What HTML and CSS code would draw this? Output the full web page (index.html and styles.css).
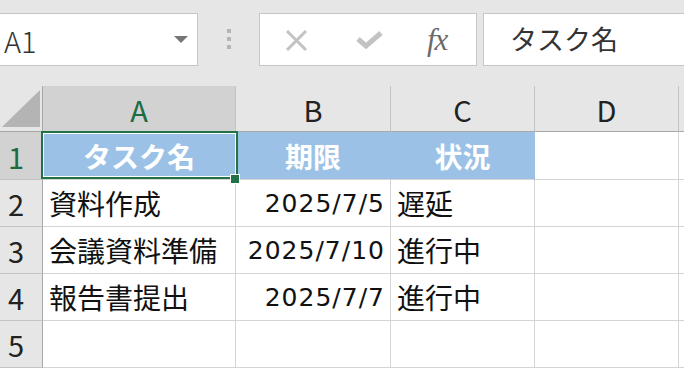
FILE: index.html
```html
<!DOCTYPE html>
<html lang="ja">
<head>
  <meta charset="UTF-8" />
  <title>タスク一覧</title>
  <link rel="stylesheet" href="styles.css">
</head>
<body>

  <!-- 数式バー -->
  <div class="toolbar">
    <div class="namebox">
      <span class="ref">A1</span>
      <span class="caret"></span>
    </div>
    <div class="grip"><i></i><i></i><i></i></div>
    <div class="fxbox">
      <svg class="ico-x" width="23" height="21" viewBox="0 0 23 21">
        <path d="M2 1 L21 20 M21 1 L2 20" stroke="#c3c3c3" stroke-width="3" fill="none" />
      </svg>
      <svg class="ico-ok" width="27" height="18" viewBox="0 0 27 18">
        <path d="M2 8 L10 15 L25 2" stroke="#c3c3c3" stroke-width="5" fill="none" />
      </svg>
      <span class="fx">fx</span>
    </div>
    <div class="formula">タスク名</div>
  </div>

  <!-- シート -->
  <div class="sheet">
    <div class="hd corner"><span class="tri"></span></div>
    <div class="hd col active">A</div>
    <div class="hd col">B</div>
    <div class="hd col">C</div>
    <div class="hd col">D</div>
    <div class="hd col last"></div>

    <div class="hd row active">1</div>
    <div class="c title">タスク名</div>
    <div class="c title">期限</div>
    <div class="c title">状況</div>
    <div class="c"></div>
    <div class="c"></div>

    <div class="hd row">2</div>
    <div class="c">資料作成</div>
    <div class="c num">2025/7/5</div>
    <div class="c">遅延</div>
    <div class="c"></div>
    <div class="c"></div>

    <div class="hd row">3</div>
    <div class="c">会議資料準備</div>
    <div class="c num">2025/7/10</div>
    <div class="c">進行中</div>
    <div class="c"></div>
    <div class="c"></div>

    <div class="hd row">4</div>
    <div class="c">報告書提出</div>
    <div class="c num">2025/7/7</div>
    <div class="c">進行中</div>
    <div class="c"></div>
    <div class="c"></div>

    <div class="hd row">5</div>
    <div class="c"></div>
    <div class="c"></div>
    <div class="c"></div>
    <div class="c"></div>
    <div class="c"></div>

    <!-- 選択セル枠 -->
    <div class="sel"></div>
    <div class="handle"></div>
  </div>

</body>
</html>
```

FILE: styles.css
```css
body {
  margin: 0;
  background: #fff;
  font-family: "Noto Sans CJK JP", sans-serif;
  overflow: hidden;
}

/* 数式バー */
.toolbar {
  display: flex;
  align-items: flex-start;
  height: 86px;
  padding-top: 13px;
  box-sizing: border-box;
  background: #e6e6e6;
}

.namebox {
  width: 198px;
  height: 53px;
  box-sizing: border-box;
  background: #fff;
  border: 1px solid #c6c6c6;
  border-left: none;
  display: flex;
  align-items: center;
  justify-content: space-between;
  padding: 0 9px 0 4px;
}
.namebox .ref {
  font-size: 29px;
  color: #333;
  font-weight: 300;
}
.namebox .caret {
  width: 0;
  height: 0;
  border-left: 7px solid transparent;
  border-right: 7px solid transparent;
  border-top: 7px solid #767676;
}

.grip {
  display: flex;
  flex-direction: column;
  gap: 4px;
  margin: 16px 0 0 29px;
}
.grip i {
  width: 4px;
  height: 4px;
  background: #b4b4b4;
}

.fxbox {
  width: 218px;
  height: 53px;
  box-sizing: border-box;
  margin-left: 28px;
  background: #fff;
  border: 1px solid #c6c6c6;
  display: flex;
  align-items: center;
  padding-left: 25px;
}
.ico-x {
  margin-top: 1px;
}
.ico-ok {
  margin: 1px 0 0 48px;
}
.fx {
  margin-left: 44px;
  font-family: "Liberation Serif", serif;
  font-style: italic;
  font-size: 31px;
  color: #6b6b6b;
  letter-spacing: -1px;
}

.formula {
  flex: 1;
  height: 53px;
  box-sizing: border-box;
  margin-left: 6px;
  background: #fff;
  border: 1px solid #c6c6c6;
  border-right: none;
  padding-left: 26px;
  font-size: 27px;
  line-height: 50px;
  color: #333;
}

/* シート */
.sheet {
  position: relative;
  display: grid;
  grid-template-columns: 43px 193px 155px 144px 144px 1fr;
  grid-template-rows: 46px 48px 47px 47px 47px 47px;
}

.hd {
  box-sizing: border-box;
  background: #e6e6e6;
  display: flex;
  align-items: center;
  justify-content: center;
  font-size: 29px;
  color: #222;
}
.hd.col {
  border-right: 1px solid #c4c4c4;
  border-bottom: 1px solid #a8a8a8;
}
.hd.last {
  border-right: none;
}
.hd.row {
  justify-content: flex-start;
  padding-left: 8px;
  border-right: 1px solid #a8a8a8;
  border-bottom: 1px solid #c4c4c4;
}
.hd.active {
  background: #d2d2d2;
  color: #1d6b41;
}
.corner {
  border-right: 1px solid #a8a8a8;
  border-bottom: 1px solid #a8a8a8;
  justify-content: flex-start;
  align-items: flex-start;
  padding: 4px 0 0 2px;
}
.tri {
  width: 0;
  height: 0;
  border-left: 38px solid transparent;
  border-bottom: 37px solid #b4b4b4;
}

.c {
  box-sizing: border-box;
  border-right: 1px solid #d4d4d4;
  border-bottom: 1px solid #d4d4d4;
  display: flex;
  align-items: center;
  padding: 0 6px;
  font-size: 28px;
  color: #111;
  white-space: nowrap;
  overflow: hidden;
}
.c.num {
  justify-content: flex-end;
  padding-right: 5px;
  font-family: "DejaVu Sans", sans-serif;
  font-size: 25px;
  letter-spacing: 1px;
}
.c.title {
  background: #9bc2e6;
  border-right-color: #9bc2e6;
  justify-content: center;
  color: #fff;
  font-weight: bold;
}

/* 選択セル枠 */
.sel {
  position: absolute;
  left: 41px;
  top: 45px;
  width: 197px;
  height: 48px;
  box-sizing: border-box;
  border: 2px solid #217346;
  box-shadow: inset 0 0 0 1px #fff;
}
.handle {
  position: absolute;
  left: 230px;
  top: 88px;
  width: 10px;
  height: 10px;
  box-sizing: border-box;
  background: #217346;
  border: 1px solid #fff;
}
```
